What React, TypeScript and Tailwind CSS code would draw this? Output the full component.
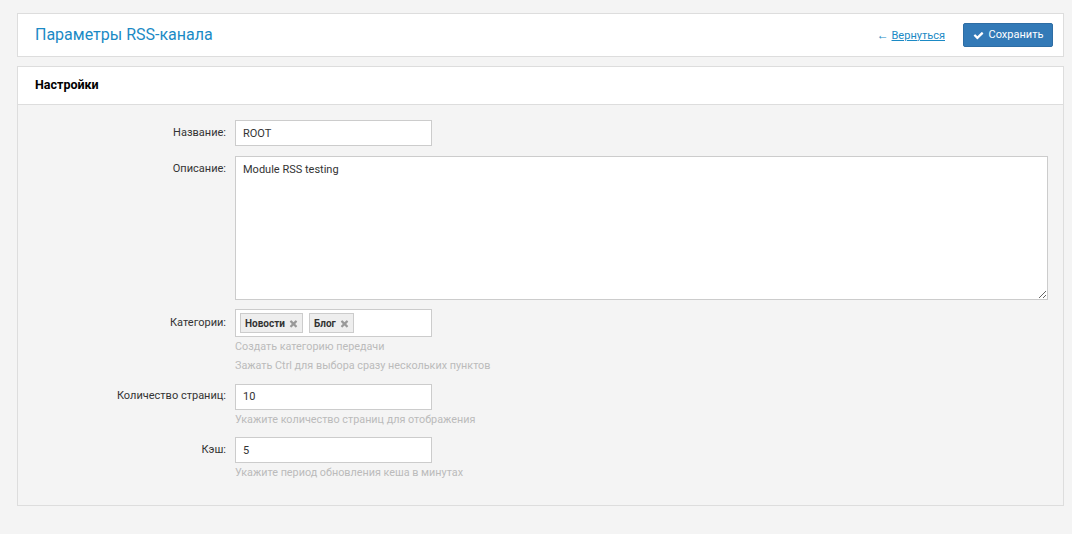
const labelCls = "w-[217px] flex-none pr-[9px] pt-[6px] text-right text-[11px] leading-[14px] text-[#333]";
const inputCls =
  "h-[26px] w-[197px] border border-[#ccc] bg-white px-[7px] text-[11px] text-[#333] outline-none";
const helpCls = "text-[10.8px] leading-[19px] text-[#bbb]";

function CheckIcon() {
  return (
    <svg width="11" height="11" viewBox="0 0 1792 1792" fill="currentColor">
      <path d="M1671 566q0 40-28 68l-724 724-136 136q-28 28-68 28t-68-28l-136-136-362-362q-28-28-28-68t28-68l136-136q28-28 68-28t68 28l294 295 656-657q28-28 68-28t68 28l136 136q28 28 28 68z" />
    </svg>
  );
}

function TimesIcon() {
  return (
    <svg width="9" height="11" viewBox="0 0 1408 1792" fill="currentColor">
      <path d="M1298 1322q0 40-28 68l-136 136q-28 28-68 28t-68-28l-294-294-294 294q-28 28-68 28t-68-28l-136-136q-28-28-28-68t28-68l294-294-294-294q-28-28-28-68t28-68l136-136q28-28 68-28t68 28l294 294 294-294q28-28 68-28t68 28l136 136q28 28 28 68t-28 68l-294 294 294 294q28 28 28 68z" />
    </svg>
  );
}

function Tag({ label }: { label: string }) {
  return (
    <span className="flex h-[20px] items-center gap-[4px] border border-[#ccc] bg-[#eee] pl-[4px] pr-[4px] text-[10px] font-bold text-[#333]">
      {label}
      <span className="text-[#999]">
        <TimesIcon />
      </span>
    </span>
  );
}

export default function App() {
  return (
    <div
      className="min-h-[534px] bg-[#f4f4f4] pl-[17px] pr-[8px] pt-[13px]"
      style={{ fontFamily: "Roboto, 'Noto Sans', sans-serif" }}
    >
      <div className="flex h-[44px] items-center justify-between border border-[#ddd] bg-white pl-[17px] pr-[10px]">
        <h1 className="text-[16px] font-normal text-[#1b8ac5]">Параметры RSS-канала</h1>
        <div className="flex items-center gap-[18px]">
          <a href="#" className="text-[11px] text-[#1b8ac5]">
            <span className="text-[12px]">←</span> <span className="underline">Вернуться</span>
          </a>
          <button className="flex h-[24px] w-[90px] items-center justify-center gap-[5px] rounded-[2px] border border-[#2e6da4] bg-[#337ab7] text-[11px] text-white">
            <CheckIcon />
            Сохранить
          </button>
        </div>
      </div>

      <div className="mt-[9px] border border-[#ddd]">
        <div className="flex h-[38px] items-center border-b border-[#ddd] bg-white pl-[17px]">
          <h2 className="text-[12.5px] font-bold text-black">Настройки</h2>
        </div>

        <div className="pb-[23px] pr-[15px] pt-[15px]">
          <div className="mb-[10px] flex">
            <label className={labelCls}>Название:</label>
            <input className={inputCls} defaultValue="ROOT" />
          </div>

          <div className="mb-[9px] flex">
            <label className={labelCls}>Описание:</label>
            <textarea
              className="h-[144px] flex-1 border border-[#ccc] bg-white px-[7px] py-[5px] text-[11px] text-[#333] outline-none"
              defaultValue="Module RSS testing"
            />
          </div>

          <div className="mb-[8px] flex">
            <label className={labelCls + " pt-[7px]"}>Категории:</label>
            <div>
              <div className="flex h-[28px] w-[197px] items-center gap-[6px] border border-[#ccc] bg-white pl-[4px]">
                <Tag label="Новости" />
                <Tag label="Блог" />
              </div>
              <div className={helpCls}>Создать категорию передачи</div>
              <div className={helpCls}>Зажать Ctrl для выбора сразу нескольких пунктов</div>
            </div>
          </div>

          <div className="mb-[8px] flex">
            <label className={labelCls}>Количество страниц:</label>
            <div>
              <input className={inputCls} defaultValue="10" />
              <div className={helpCls}>Укажите количество страниц для отображения</div>
            </div>
          </div>

          <div className="flex">
            <label className={labelCls}>Кэш:</label>
            <div>
              <input className={inputCls} defaultValue="5" />
              <div className={helpCls}>Укажите период обновления кеша в минутах</div>
            </div>
          </div>
        </div>
      </div>
    </div>
  );
}
